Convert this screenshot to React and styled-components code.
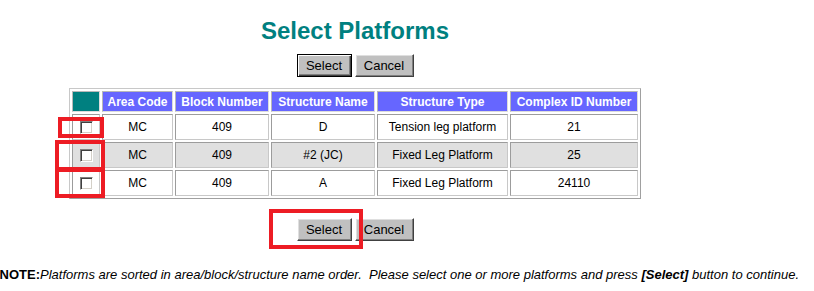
import React from "react";
import styled, { createGlobalStyle } from "styled-components";

const rows = [
  { area: "MC", block: "409", name: "D", type: "Tension leg platform", complex: "21" },
  { area: "MC", block: "409", name: "#2 (JC)", type: "Fixed Leg Platform", complex: "25" },
  { area: "MC", block: "409", name: "A", type: "Fixed Leg Platform", complex: "24110" },
];

const columns = [
  { label: "Area Code", width: 71 },
  { label: "Block Number", width: 94 },
  { label: "Structure Name", width: 104 },
  { label: "Structure Type", width: 131 },
  { label: "Complex ID Number", width: 128 },
];

// red annotation boxes drawn over the checkbox column
const marks = [
  { left: -11, top: 29, width: 46, height: 21 },
  { left: -14, top: 52, width: 50, height: 31 },
  { left: -14, top: 80, width: 50, height: 30 },
];

const GlobalStyle = createGlobalStyle`
  body {
    margin: 0;
    background: #fff;
    font-family: "Liberation Sans", Arial, sans-serif;
    overflow: hidden;
  }
`;

const Page = styled.main`
  width: 710px;
  padding-top: 17px;
  display: flex;
  flex-direction: column;
  align-items: center;
`;

const Title = styled.h1`
  margin: 0;
  font-size: 24px;
  line-height: 28px;
  font-weight: bold;
  color: #008080;
`;

const ButtonRow = styled.div`
  display: flex;
  gap: 3px;
  margin-top: ${(p) => p.$top}px;
  position: relative;
`;

const Button = styled.button`
  box-sizing: border-box;
  height: 23px;
  min-width: ${(p) => p.$w}px;
  padding: 0 8px;
  font-family: "Liberation Sans", Arial, sans-serif;
  font-size: 13px;
  color: #000;
  background: #c0c0c0;
  border: 1px solid;
  border-color: ${(p) => (p.$default ? "#000" : "#fff #404040 #404040 #fff")};
  box-shadow: ${(p) =>
    p.$default
      ? "inset 1px 1px #fff, inset -1px -1px #404040, inset -2px -2px #808080"
      : "inset -1px -1px #808080, inset 1px 1px #dfdfdf"};
  border-radius: 0;
  cursor: pointer;
`;

const TableWrap = styled.div`
  position: relative;
  margin-top: 11px;
`;

const Table = styled.table`
  width: 572px;
  table-layout: fixed;
  border-collapse: separate;
  border-spacing: 2px;
  border: 1px solid;
  border-color: #c8c8c8 #a0a0a0 #a0a0a0 #c8c8c8;
  font-size: 12px;
`;

const HeadCell = styled.th`
  box-sizing: border-box;
  width: ${(p) => p.$w}px;
  height: 21px;
  padding: 0;
  background: ${(p) => (p.$corner ? "#008080" : "#6666ff")};
  color: #fff;
  font-weight: bold;
  text-align: center;
  border: 1px solid;
  border-color: #b8b8b8 #dcdcdc #dcdcdc #b8b8b8;
`;

const Cell = styled.td`
  box-sizing: border-box;
  height: 26px;
  padding: 0;
  text-align: center;
  color: #000;
  background: ${(p) => (p.$shade ? "#e0e0e0" : "#fff")};
  border: 1px solid;
  border-color: #9c9c9c #c8c8c8 #c8c8c8 #9c9c9c;
`;

const Check = styled.input.attrs({ type: "checkbox" })`
  appearance: none;
  box-sizing: border-box;
  display: block;
  width: 13px;
  height: 13px;
  margin: 0 auto;
  background: #fff;
  border: 1px solid;
  border-color: #808080 #fff #fff #808080;
  box-shadow: inset 1px 1px #404040, inset -1px -1px #d4d0c8;
`;

const Mark = styled.div`
  position: absolute;
  box-sizing: border-box;
  border: 4px solid #ed1c24;
  pointer-events: none;
`;

const Note = styled.p`
  margin: 26px 0 0;
  width: 814px;
  padding-right: 15px;
  box-sizing: border-box;
  display: flex;
  justify-content: flex-end;
  font-size: 13px;
  line-height: 15px;
  color: #000;
  white-space: nowrap;

  span {
    flex-shrink: 0;
  }
`;

export default function App() {
  return (
    <>
      <GlobalStyle />
      <Page>
        <Title>Select Platforms</Title>
        <ButtonRow $top={9}>
          <Button $default $w={55}>Select</Button>
          <Button $w={59}>Cancel</Button>
        </ButtonRow>
        <TableWrap>
          <Table>
            <thead>
              <tr>
                <HeadCell $corner $w={28} />
                {columns.map((c) => (
                  <HeadCell key={c.label} $w={c.width}>
                    {c.label}
                  </HeadCell>
                ))}
              </tr>
            </thead>
            <tbody>
              {rows.map((r, i) => (
                <tr key={i}>
                  <Cell $shade={i === 1}>
                    <Check />
                  </Cell>
                  <Cell $shade={i === 1}>{r.area}</Cell>
                  <Cell $shade={i === 1}>{r.block}</Cell>
                  <Cell $shade={i === 1}>{r.name}</Cell>
                  <Cell $shade={i === 1}>{r.type}</Cell>
                  <Cell $shade={i === 1}>{r.complex}</Cell>
                </tr>
              ))}
            </tbody>
          </Table>
          {marks.map((m, i) => (
            <Mark key={i} style={m} />
          ))}
        </TableWrap>
        <ButtonRow $top={19}>
          <Button $w={55}>Select</Button>
          <Button $w={59}>Cancel</Button>
          <Mark style={{ left: -28, top: -9, width: 94, height: 40 }} />
        </ButtonRow>
      </Page>
      <Note>
        <span>
          <b>NOTE:</b>
          <i>
            Platforms are sorted in area/block/structure name order.&nbsp; Please
            select one or more platforms and press <b>[Select]</b> button to continue.
          </i>
        </span>
      </Note>
    </>
  );
}
